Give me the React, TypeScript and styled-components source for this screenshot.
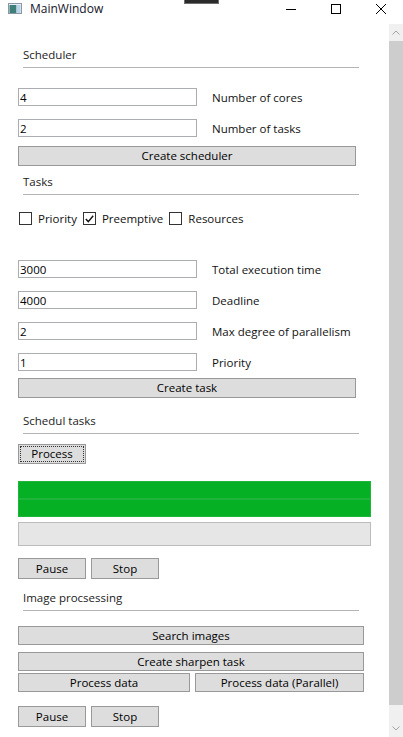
import React from "react";
import styled, { createGlobalStyle } from "styled-components";

const GlobalStyle = createGlobalStyle`
  html, body {
    margin: 0;
    padding: 0;
    background: #fff;
  }
  body {
    font-family: "Open Sans", "Noto Sans", sans-serif;
    font-size: 11.5px;
    color: #000;
  }
`;

interface TopProps {
  $top?: number;
}

const AppIcon: React.FC = () => (
  <svg width="14" height="11" viewBox="0 0 14 11">
    <rect x="0.5" y="0.5" width="13" height="10" fill="#e8eef4" stroke="#8a97a6" />
    <rect x="1.5" y="2" width="7" height="8" fill="#3f7f7a" />
    <rect x="8.5" y="2" width="4" height="8" fill="#b9d3e6" />
  </svg>
);

const Chevron: React.FC<{ down?: boolean }> = ({ down }) => (
  <svg width="8" height="5" viewBox="0 0 8 5">
    <polyline
      points={down ? "0.5,0.5 4,4 7.5,0.5" : "0.5,4.5 4,1 7.5,4.5"}
      fill="none"
      stroke="#a3a3a3"
      strokeWidth="1"
    />
  </svg>
);

const ProgressBar: React.FC<{ value: number; height: number; top?: number }> = (props) => (
  <Track $height={props.height} $top={props.top} $filled={props.value > 0}>
    <Fill style={{ width: `${props.value}%` }} />
  </Track>
);

const CheckBox: React.FC<{ checked?: boolean; label: string }> = (props) => (
  <CheckItem>
    <Box>
      {props.checked && (
        <svg width="9" height="8" viewBox="0 0 9 8">
          <polyline points="0.8,4 3.3,6.6 8.2,0.8" fill="none" stroke="#111" strokeWidth="1.4" />
        </svg>
      )}
    </Box>
    {props.label}
  </CheckItem>
);

const Field: React.FC<{ value: string; label: string; top: number }> = (props) => (
  <FieldRow $top={props.top}>
    <TextInput defaultValue={props.value} />
    <FieldLabel>{props.label}</FieldLabel>
  </FieldRow>
);

const App: React.FC = () => {
  return (
    <Window>
      <GlobalStyle />
      <TitleBar>
        <IconSlot>
          <AppIcon />
        </IconSlot>
        <Title>MainWindow</Title>
        <Overlay />
        <CaptionButtons>
          <CaptionButton>
            <svg width="10" height="10" viewBox="0 0 10 10">
              <line x1="0" y1="5.5" x2="10" y2="5.5" stroke="#000" />
            </svg>
          </CaptionButton>
          <CaptionButton>
            <svg width="10" height="10" viewBox="0 0 10 10">
              <rect x="0.5" y="0.5" width="9" height="9" fill="none" stroke="#000" />
            </svg>
          </CaptionButton>
          <CaptionButton>
            <svg width="10" height="10" viewBox="0 0 10 10">
              <line x1="0" y1="0" x2="10" y2="10" stroke="#000" />
              <line x1="10" y1="0" x2="0" y2="10" stroke="#000" />
            </svg>
          </CaptionButton>
        </CaptionButtons>
      </TitleBar>

      <Body>
        <Content>
          <SectionHeader $top={23}>Scheduler</SectionHeader>
          <Field top={20} value="4" label="Number of cores" />
          <Field top={13} value="2" label="Number of tasks" />
          <Button $top={9} $width={338} $height={20}>Create scheduler</Button>

          <SectionHeader $top={8}>Tasks</SectionHeader>
          <CheckRow $top={17}>
            <CheckBox label="Priority" />
            <CheckBox checked label="Preemptive" />
            <CheckBox label="Resources" />
          </CheckRow>

          <Field top={35} value="3000" label="Total execution time" />
          <Field top={13} value="4000" label="Deadline" />
          <Field top={13} value="2" label="Max degree of parallelism" />
          <Field top={13} value="1" label="Priority" />
          <Button $top={7} $width={338} $height={20}>Create task</Button>

          <SectionHeader $top={15}>Schedul tasks</SectionHeader>
          <Button $top={10} $width={68} $height={20} $focused>Process</Button>

          <Bars $top={17}>
            <ProgressBar value={100} height={18} />
            <ProgressBar value={100} height={18} />
          </Bars>
          <ProgressBar value={0} height={24} top={5} />

          <ButtonRow $top={12}>
            <Button $width={68} $height={21}>Pause</Button>
            <Button $width={68} $height={21}>Stop</Button>
          </ButtonRow>

          <SectionHeader $top={11}>Image procsessing</SectionHeader>
          <Button $top={15} $width={346} $height={19}>Search images</Button>
          <Button $top={7} $width={346} $height={19}>Create sharpen task</Button>
          <SplitRow $top={2}>
            <Button $height={19}>Process data</Button>
            <Button $height={19}>Process data (Parallel)</Button>
          </SplitRow>

          <ButtonRow $top={14}>
            <Button $width={68} $height={21}>Pause</Button>
            <Button $width={68} $height={21}>Stop</Button>
          </ButtonRow>
        </Content>

        <ScrollBar>
          <ScrollArrow>
            <Chevron />
          </ScrollArrow>
          <ScrollThumb />
          <ScrollTrack />
          <ScrollArrow>
            <Chevron down />
          </ScrollArrow>
        </ScrollBar>
      </Body>
    </Window>
  );
};

const Window = styled.div`
  width: 403px;
  height: 737px;
  display: flex;
  flex-direction: column;
  overflow: hidden;
  background: #fff;
`;

const TitleBar = styled.div`
  position: relative;
  height: 24px;
  flex-shrink: 0;
  display: flex;
  align-items: flex-start;
`;

const IconSlot = styled.div`
  margin: 3px 0 0 8px;
  height: 11px;
  display: flex;
`;

const Title = styled.span`
  margin-left: 8px;
  line-height: 18px;
  font-size: 12px;
  color: #141428;
`;

const Overlay = styled.div`
  position: absolute;
  left: 184px;
  top: 0;
  width: 35px;
  height: 4px;
  box-sizing: border-box;
  background: #2b2b2b;
  border: 1px solid #6e6e6e;
  border-top: none;
`;

const CaptionButtons = styled.div`
  margin-left: auto;
  display: flex;
`;

const CaptionButton = styled.div`
  width: 45px;
  height: 18px;
  display: flex;
  align-items: center;
  justify-content: center;
`;

const Body = styled.div`
  flex: 1;
  display: flex;
  min-height: 0;
`;

const Content = styled.div`
  flex: 1;
  padding-left: 18px;
  display: flex;
  flex-direction: column;
  align-items: flex-start;
`;

const SectionHeader = styled.div<TopProps>`
  margin-top: ${(p) => p.$top ?? 0}px;
  margin-left: 5px;
  width: 336px;
  line-height: 16px;
  padding-bottom: 4px;
  border-bottom: 1px solid #b4b4b4;
  color: #222;
`;

const FieldRow = styled.div<TopProps>`
  margin-top: ${(p) => p.$top ?? 0}px;
  display: flex;
  align-items: center;
  height: 18px;
`;

const TextInput = styled.input`
  width: 179px;
  height: 18px;
  box-sizing: border-box;
  border: 1px solid #abadb3;
  padding: 0 1px;
  font: inherit;
  color: #000;
  background: #fff;
  outline: none;
`;

const FieldLabel = styled.label`
  margin-left: 15px;
  color: #111;
`;

const Button = styled.button<TopProps & { $width?: number; $height: number; $focused?: boolean }>`
  position: relative;
  margin-top: ${(p) => p.$top ?? 0}px;
  width: ${(p) => (p.$width ? `${p.$width}px` : "auto")};
  height: ${(p) => p.$height}px;
  box-sizing: border-box;
  padding: 0;
  background: #dddddd;
  border: 1px solid #999;
  font: inherit;
  color: #000;
  line-height: 1;
  ${(p) =>
    p.$focused &&
    `&::after {
      content: "";
      position: absolute;
      inset: 1px;
      border: 1px dotted #333;
    }`}
`;

const CheckRow = styled.div<TopProps>`
  margin-top: ${(p) => p.$top ?? 0}px;
  padding-left: 1px;
  height: 13px;
  display: flex;
  align-items: center;
  gap: 6px;
`;

const CheckItem = styled.label`
  display: flex;
  align-items: center;
  gap: 6px;
  color: #111;
`;

const Box = styled.span`
  width: 13px;
  height: 13px;
  box-sizing: border-box;
  border: 1px solid #333;
  background: #fff;
  display: flex;
  align-items: center;
  justify-content: center;
`;

const Bars = styled.div<TopProps>`
  margin-top: ${(p) => p.$top ?? 0}px;
  display: flex;
  flex-direction: column;
`;

const Track = styled.div<TopProps & { $height: number; $filled: boolean }>`
  margin-top: ${(p) => p.$top ?? 0}px;
  width: 353px;
  height: ${(p) => p.$height}px;
  box-sizing: border-box;
  border: 1px solid ${(p) => (p.$filled ? "#1fb53b" : "#bcbcbc")};
  background: #e6e6e6;
  display: flex;
`;

const Fill = styled.div`
  height: 100%;
  background: #06b025;
`;

const ButtonRow = styled.div<TopProps>`
  margin-top: ${(p) => p.$top ?? 0}px;
  display: flex;
  gap: 5px;
`;

const SplitRow = styled.div<TopProps>`
  margin-top: ${(p) => p.$top ?? 0}px;
  width: 346px;
  display: grid;
  grid-template-columns: 172px 169px;
  gap: 5px;
`;

const ScrollBar = styled.div`
  width: 14px;
  display: flex;
  flex-direction: column;
  background: #f0f0f0;
`;

const ScrollArrow = styled.div`
  height: 17px;
  display: flex;
  align-items: center;
  justify-content: center;
`;

const ScrollThumb = styled.div`
  height: 664px;
  background: #cdcdcd;
`;

const ScrollTrack = styled.div`
  flex: 1;
`;

export default App;
